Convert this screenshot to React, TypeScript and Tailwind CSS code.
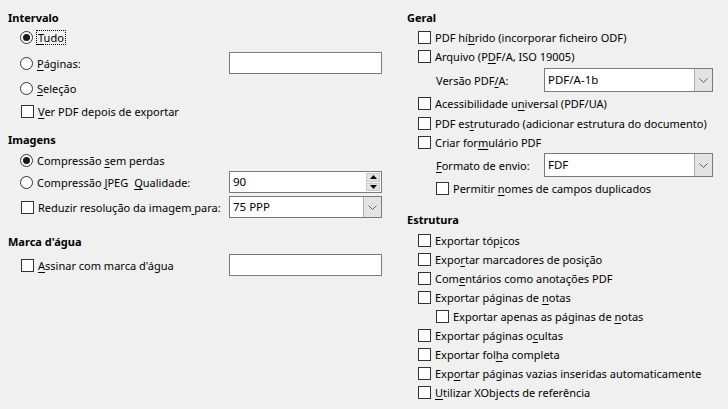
import React from 'react'

const font = { fontFamily: '"Noto Sans", "Open Sans", sans-serif' }

function L({ t, u }: { t: string; u?: number }) {
  if (u === undefined) return <span>{t}</span>
  return (
    <span className="whitespace-nowrap">
      {t.slice(0, u)}
      <span className="underline underline-offset-2">{t[u]}</span>
      {t.slice(u + 1)}
    </span>
  )
}

function Radio({ checked }: { checked?: boolean }) {
  return (
    <span className="w-[13px] h-[13px] shrink-0 rounded-full border border-[#333] bg-white flex items-center justify-center">
      {checked && <span className="w-[7px] h-[7px] rounded-full bg-[#1a1a1a]" />}
    </span>
  )
}

function Box() {
  return <span className="w-[13px] h-[13px] shrink-0 border border-[#333] bg-white" />
}

function Check({ t, u, h = 'h-[19px]', indent = false }: { t: string; u?: number; h?: string; indent?: boolean }) {
  return (
    <div className={`flex items-center gap-[4px] whitespace-nowrap ${h} ${indent ? 'pl-[29px]' : 'pl-[11px]'}`}>
      <Box />
      <L t={t} u={u} />
    </div>
  )
}

function Chevron() {
  return (
    <svg width="9" height="5" viewBox="0 0 9 5" fill="none">
      <path d="M0.5 0.5 L4.5 4.5 L8.5 0.5" stroke="#606060" strokeWidth="1" />
    </svg>
  )
}

function Combo({ value, w }: { value: string; w: string }) {
  return (
    <div className={`${w} h-full flex border border-[#7a7a7a] bg-white`}>
      <div className="flex-1 flex items-center pl-[3px] text-[11.5px]">{value}</div>
      <div className="w-[18px] bg-[#e3e3e3] border-l border-[#adadad] flex items-center justify-center">
        <Chevron />
      </div>
    </div>
  )
}

function Spin({ value }: { value: string }) {
  return (
    <div className="w-[153px] h-full flex border border-[#7a7a7a] bg-white">
      <div className="flex-1 flex items-center pl-[3px] text-[11.5px]">{value}</div>
      <div className="w-[16px] flex flex-col gap-[1px] p-[1px]">
        <div className="flex-1 bg-[#e3e3e3] border border-[#c8c8c8] flex items-center justify-center">
          <svg width="7" height="4" viewBox="0 0 7 4">
            <path d="M0 4 L3.5 0 L7 4 Z" fill="#000" />
          </svg>
        </div>
        <div className="flex-1 bg-[#e3e3e3] border border-[#c8c8c8] flex items-center justify-center">
          <svg width="7" height="4" viewBox="0 0 7 4">
            <path d="M0 0 L3.5 4 L7 0 Z" fill="#000" />
          </svg>
        </div>
      </div>
    </div>
  )
}

function Input() {
  return <div className="w-[153px] h-full border border-[#7a7a7a] bg-white" />
}

function Header({ t, cls = '' }: { t: string; cls?: string }) {
  return <div className={`h-[18px] flex items-center font-bold whitespace-nowrap ${cls}`}>{t}</div>
}

export default function App() {
  return (
    <div
      className="w-[728px] h-[409px] bg-[#f0f0f0] text-black text-[11px] leading-none flex pl-[8px] pt-[8px] overflow-hidden"
      style={font}
    >
      {/* left column */}
      <div className="w-[374px] flex flex-col">
        <Header t="Intervalo" />
        <div className="h-[20px] mt-[1px] pl-[12px] flex items-center gap-[4px]">
          <Radio checked />
          <span className="outline outline-1 outline-dotted outline-black px-[1px] py-[1px]">
            <L t="Tudo" u={0} />
          </span>
        </div>
        <div className="h-[22px] mt-[5px] pl-[12px] flex items-center justify-between">
          <div className="flex items-center gap-[4px]">
            <Radio />
            <L t="Páginas:" u={0} />
          </div>
          <Input />
        </div>
        <div className="h-[20px] mt-[4px] pl-[12px] flex items-center gap-[4px]">
          <Radio />
          <L t="Seleção" u={0} />
        </div>
        <div className="h-[20px] mt-[3px] pl-[13px] flex items-center gap-[4px]">
          <Box />
          <L t="Ver PDF depois de exportar" u={0} />
        </div>

        <Header t="Imagens" cls="mt-[9px]" />
        <div className="h-[20px] mt-[2px] pl-[12px] flex items-center gap-[4px]">
          <Radio checked />
          <L t="Compressão sem perdas" u={11} />
        </div>
        <div className="h-[22px] mt-[1px] pl-[12px] flex items-center justify-between">
          <div className="flex items-center gap-[4px]">
            <Radio />
            <span className="whitespace-nowrap">
              <L t="Compressão JPEG" u={11} />
              <span className="ml-[6px]">
                <L t="Qualidade:" u={0} />
              </span>
            </span>
          </div>
          <Spin value="90" />
        </div>
        <div className="h-[22px] mt-[3px] pl-[13px] flex items-center justify-between">
          <div className="flex items-center gap-[4px]">
            <Box />
            <L t="Reduzir resolução da imagem para:" u={27} />
          </div>
          <Combo value="75 PPP" w="w-[153px]" />
        </div>

        <Header t="Marca d'água" cls="mt-[14px]" />
        <div className="h-[22px] mt-[4px] pl-[13px] flex items-center justify-between">
          <div className="flex items-center gap-[4px]">
            <Box />
            <L t="Assinar com marca d'água" u={0} />
          </div>
          <Input />
        </div>
      </div>

      {/* right column */}
      <div className="w-[306px] ml-[25px] flex flex-col">
        <Header t="Geral" />
        <div className="mt-[2px]">
          <Check t="PDF híbrido (incorporar ficheiro ODF)" u={6} />
          <Check t="Arquivo (PDF/A, ISO 19005)" u={10} />
        </div>
        <div className="h-[24px] mt-[2px] pl-[29px] flex items-center">
          <span className="w-[108px]">
            <L t="Versão PDF/A:" u={10} />
          </span>
          <Combo value="PDF/A-1b" w="w-[169px]" />
        </div>
        <div className="mt-[2px]">
          <Check t="Acessibilidade universal (PDF/UA)" u={16} />
        </div>
        <div className="mt-[1px]">
          <Check t="PDF estruturado (adicionar estrutura do documento)" u={6} />
          <Check t="Criar formulário PDF" u={9} />
        </div>
        <div className="h-[24px] mt-[1px] pl-[29px] flex items-center">
          <span className="w-[108px]">
            <L t="Formato de envio:" u={0} />
          </span>
          <Combo value="FDF" w="w-[169px]" />
        </div>
        <div className="mt-[2px]">
          <Check t="Permitir nomes de campos duplicados" u={9} indent />
        </div>

        <Header t="Estrutura" cls="mt-[12px]" />
        <div className="mt-[3px]">
          <Check t="Exportar tópicos" u={12} />
          <Check t="Exportar marcadores de posição" u={4} />
          <Check t="Comentários como anotações PDF" u={3} />
          <Check t="Exportar páginas de notas" u={20} />
          <Check t="Exportar apenas as páginas de notas" u={30} indent />
          <Check t="Exportar páginas ocultas" u={18} />
          <Check t="Exportar folha completa" u={12} />
          <Check t="Exportar páginas vazias inseridas automaticamente" u={3} />
          <Check t="Utilizar XObjects de referência" u={0} />
        </div>
      </div>
    </div>
  )
}
